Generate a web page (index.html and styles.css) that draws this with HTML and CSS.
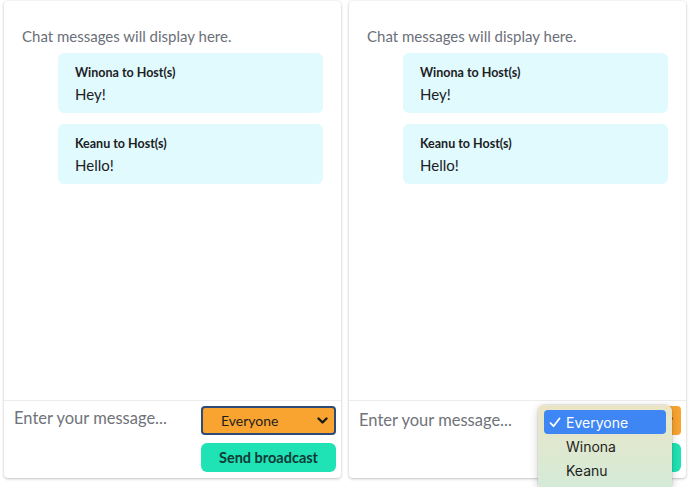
FILE: index.html
```html
<!DOCTYPE html>
<html lang="en">
<head>
<meta charset="utf-8">
<title>Chat</title>
<link rel="stylesheet" href="styles.css">
</head>
<body>
<div class="stage">
  <section class="chat">
    <div class="messages">
      <p class="empty">Chat messages will display here.</p>
      <div class="bubble">
        <div class="from">Winona to Host(s)</div>
        <div class="text">Hey!</div>
      </div>
      <div class="bubble">
        <div class="from">Keanu to Host(s)</div>
        <div class="text">Hello!</div>
      </div>
    </div>
    <div class="composer">
      <input class="entry" type="text" placeholder="Enter your message...">
      <div class="controls">
        <div class="select focused">
          <span>Everyone</span>
          <svg class="chevron" width="11" height="8" viewBox="0 0 11 8"><polyline points="1.5,1.5 5.5,5.5 9.5,1.5" fill="none" stroke="#1d1d1d" stroke-width="2.4" stroke-linecap="round" stroke-linejoin="round"/></svg>
        </div>
        <button class="send" type="button">Send broadcast</button>
      </div>
    </div>
  </section>

  <section class="chat">
    <div class="messages">
      <p class="empty">Chat messages will display here.</p>
      <div class="bubble">
        <div class="from">Winona to Host(s)</div>
        <div class="text">Hey!</div>
      </div>
      <div class="bubble">
        <div class="from">Keanu to Host(s)</div>
        <div class="text">Hello!</div>
      </div>
    </div>
    <div class="composer composer-open">
      <input class="entry" type="text" placeholder="Enter your message...">
      <div class="controls">
        <div class="select">
          <span>Everyone</span>
          <svg class="chevron" width="11" height="8" viewBox="0 0 11 8"><polyline points="1.5,1.5 5.5,5.5 9.5,1.5" fill="none" stroke="#1d1d1d" stroke-width="2.4" stroke-linecap="round" stroke-linejoin="round"/></svg>
        </div>
        <button class="send" type="button">Send broadcast</button>
        <ul class="menu">
          <li class="option selected"><svg class="check" width="12" height="11" viewBox="0 0 12 11"><polyline points="1.5,6 4.5,9.2 10.5,1.5" fill="none" stroke="#ffffff" stroke-width="1.8" stroke-linecap="round" stroke-linejoin="round"/></svg>Everyone</li>
          <li class="option">Winona</li>
          <li class="option">Keanu</li>
        </ul>
      </div>
    </div>
  </section>
</div>
</body>
</html>
```

FILE: styles.css
```css
html, body {
  margin: 0;
  padding: 0;
  overflow: hidden;
  background: #ffffff;
}

body {
  font-family: "Lato", "Noto Sans", sans-serif;
  color: #1f2328;
}

.stage {
  display: flex;
  gap: 8px;
  padding: 1px 4px 0 4px;
  height: 487px;
  box-sizing: border-box;
}

.chat {
  width: 337px;
  height: 477px;
  display: flex;
  flex-direction: column;
  background: #ffffff;
  border-radius: 4px;
  box-shadow: 0 1px 3px rgba(0, 0, 0, 0.22), 0 0 2px rgba(0, 0, 0, 0.08);
}

.messages {
  flex: 1;
  padding: 25px 18px 0 18px;
}

.empty {
  margin: 0;
  font-size: 15px;
  line-height: 20px;
  color: #6b7079;
}

.bubble {
  margin: 7px 0 0 36px;
  padding: 11px 17px 9px 17px;
  background: #e0fafd;
  border-radius: 6px;
}

.bubble + .bubble {
  margin-top: 11px;
}

.from {
  font-size: 12.5px;
  line-height: 18px;
  font-weight: 700;
  color: #1c2024;
}

.text {
  margin-top: 2px;
  font-size: 15px;
  line-height: 20px;
  color: #1c2024;
}

.composer {
  display: flex;
  align-items: flex-start;
  gap: 8px;
  padding: 5px 5px 6px 5px;
  border-top: 1px solid #ececec;
}

.composer-open .entry {
  margin-top: 2px;
}

.entry {
  flex: 1;
  min-width: 0;
  height: 24px;
  margin: 0;
  padding: 0 5px;
  border: none;
  outline: none;
  background: transparent;
  font-family: "Lato", "Noto Sans", sans-serif;
  font-size: 16.5px;
  line-height: 24px;
  color: #1f2328;
}

.entry::placeholder {
  color: #6f737a;
}

.controls {
  position: relative;
  width: 135px;
  display: flex;
  flex-direction: column;
  gap: 8px;
}

.select {
  height: 29px;
  box-sizing: border-box;
  display: flex;
  align-items: center;
  justify-content: space-between;
  padding: 0 6px 0 18px;
  background: #f9a430;
  border: 2px solid transparent;
  border-radius: 4px;
  font-size: 14px;
  color: #1d1d1d;
}

.select.focused {
  border-color: #2d4b79;
}

.send {
  height: 29px;
  margin: 0;
  padding: 0;
  border: none;
  border-radius: 6px;
  background: #1fe3b4;
  font-family: "Lato", "Noto Sans", sans-serif;
  font-size: 14.5px;
  font-weight: 700;
  color: #0f3a37;
}

.menu {
  position: absolute;
  left: -8px;
  top: -1px;
  width: 134px;
  margin: 0;
  padding: 5px 6px 8px 6px;
  box-sizing: border-box;
  list-style: none;
  border-radius: 6px;
  background: linear-gradient(180deg, #ebe4c5 0%, #dfe8cf 50%, #d3ebd8 100%);
  box-shadow: 0 2px 8px rgba(0, 0, 0, 0.2), 0 0 0 0.5px rgba(0, 0, 0, 0.12);
  font-family: "Inter", "Noto Sans", sans-serif;
}

.option {
  height: 24px;
  display: flex;
  align-items: center;
  padding-left: 22px;
  font-size: 14px;
  color: #1e1e1e;
  border-radius: 4px;
}

.option.selected {
  height: 24px;
  padding-left: 5px;
  background: #3d86f4;
  color: #ffffff;
}

.check {
  margin-right: 5px;
}
```
